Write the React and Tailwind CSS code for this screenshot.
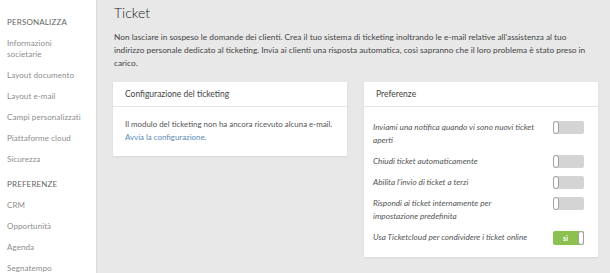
import { Fragment } from 'react';

const sezioni = [
  {
    titolo: 'PERSONALIZZA',
    voci: [
      ['Informazioni', 'societarie'],
      ['Layout documento'],
      ['Layout e-mail'],
      ['Campi personalizzati'],
      ['Piattaforme cloud'],
      ['Sicurezza'],
    ],
  },
  {
    titolo: 'PREFERENZE',
    voci: [['CRM'], ['Opportunità'], ['Agenda'], ['Segnatempo']],
  },
];

const preferenze = [
  { testo: ['Inviami una notifica quando vi sono nuovi ticket', 'aperti'], attivo: false },
  { testo: ['Chiudi ticket automaticamente'], attivo: false },
  { testo: ["Abilita l'invio di ticket a terzi"], attivo: false },
  { testo: ['Rispondi ai ticket internamente per', 'impostazione predefinita'], attivo: false },
  { testo: ['Usa Ticketcloud per condividere i ticket online'], attivo: true },
];

function Toggle({ attivo }) {
  if (attivo) {
    return (
      <div className="flex h-[14px] w-[31px] items-stretch overflow-hidden rounded-[2px] bg-[#8cc152]">
        <span className="flex flex-1 items-center justify-center text-[7px] font-bold text-white">sì</span>
        <span className="w-[6px] rounded-[3px] border border-[#a0a0a0] bg-white" />
      </div>
    );
  }
  return (
    <div className="flex h-[13px] w-[31px] items-stretch overflow-hidden rounded-[2px] bg-[#d4d4d4]">
      <span className="w-[6px] rounded-[3px] border border-[#a0a0a0] bg-white" />
    </div>
  );
}

function Card({ titolo, children, className = '' }) {
  return (
    <div className={`bg-white shadow-[0_1px_2px_rgba(0,0,0,0.08)] ${className}`}>
      <div className="flex h-[25px] items-center border-b border-[#e6e6e6] px-[12px] text-[8.5px] text-[#444]">
        {titolo}
      </div>
      {children}
    </div>
  );
}

export default function App() {
  return (
    <div className="flex h-[273px] w-[610px] overflow-hidden font-['Lato','Open_Sans',sans-serif]">
      {/* Sidebar */}
      <aside className="w-[97px] shrink-0 border-r border-[#dcdcdc] bg-white pl-[7px] pt-[17px]">
        {sezioni.map((s, i) => (
          <Fragment key={s.titolo}>
            <div className={`mb-[5px] text-[8px] leading-[11px] tracking-[0.02em] text-[#666] ${i > 0 ? 'mt-[9px]' : ''}`}>
              {s.titolo}
            </div>
            {s.voci.map((v) => (
              <div key={v[0]} className="py-[5px] text-[8px] leading-[11px] tracking-[0.01em] text-[#8c8c8c]">
                {v.map((riga) => (
                  <div key={riga}>{riga}</div>
                ))}
              </div>
            ))}
          </Fragment>
        ))}
      </aside>

      {/* Contenuto */}
      <main className="flex-1 bg-[#e8e8e8] pl-[16px] pr-[12px] pt-[3px]">
        <h1 className="pl-[1px] text-[14px] font-light leading-[20px] text-[#222]">Ticket</h1>
        <p className="mt-[8px] pl-[1px] text-[8.3px] leading-[13px] text-[#444]">
          Non lasciare in sospeso le domande dei clienti. Crea il tuo sistema di ticketing inoltrando le e-mail relative all'assistenza al tuo
          indirizzo personale dedicato al ticketing. Invia ai clienti una risposta automatica, così sapranno che il loro problema è stato preso in
          carico.
        </p>

        <div className="mt-[12px] flex items-start gap-[17px]">
          <Card titolo="Configurazione del ticketing" className="w-[234px]">
            <div className="px-[12px] pb-[12px] pt-[11px] text-[7.9px] leading-[13px] text-[#555]">
              <div>Il modulo del ticketing non ha ancora ricevuto alcuna e-mail.</div>
              <div className="text-[#5b8bb8]">Avvia la configurazione.</div>
            </div>
          </Card>

          <Card titolo="Preferenze" className="w-[234px]">
            <div className="flex flex-col gap-[8px] pb-[12px] pl-[9px] pr-[14px] pt-[14px]">
              {preferenze.map((p) => (
                <div key={p.testo[0]} className="flex items-start justify-between">
                  <div className="w-[172px] text-[8.2px] italic leading-[13px] text-[#555]">
                    {p.testo.map((riga) => (
                      <div key={riga}>{riga}</div>
                    ))}
                  </div>
                  <Toggle attivo={p.attivo} />
                </div>
              ))}
            </div>
          </Card>
        </div>

        <div className="mt-[17px] h-[40px] w-[485px] bg-white" />
      </main>
    </div>
  );
}
